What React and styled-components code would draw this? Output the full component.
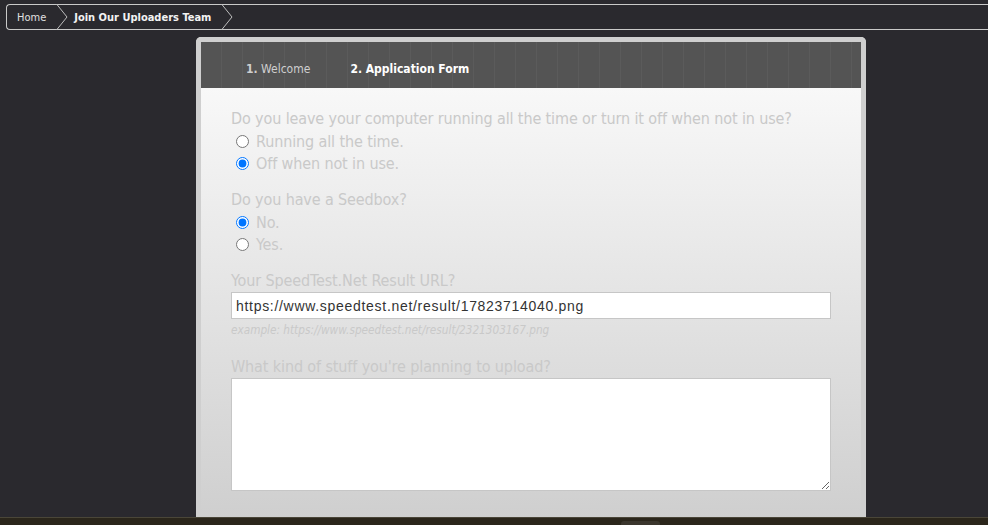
import React from "react";
import styled, { createGlobalStyle } from "styled-components";

const Global = createGlobalStyle`
  html, body {
    margin: 0;
    padding: 0;
    background: #2a292e;
    height: 100%;
    overflow: hidden;
  }
  #root {
    height: 100%;
  }
`;

const Page = styled.div`
  height: 525px;
  display: flex;
  flex-direction: column;
  font-family: "DejaVu Sans Condensed", Tahoma, sans-serif;
`;

const Crumbs = styled.nav`
  margin: 4px 0 0 6px;
  height: 26px;
  border: 1px solid #c9c9c9;
  border-right: none;
  border-radius: 4px 0 0 4px;
  display: flex;
  align-items: center;
  box-sizing: border-box;
`;

const Crumb = styled.a`
  display: flex;
  align-items: center;
  height: 100%;
  padding-left: ${(p) => (p.$first ? "10px" : "6px")};
  font-size: 11px;
  font-weight: ${(p) => (p.$strong ? "bold" : "normal")};
  color: ${(p) => (p.$strong ? "#f2f2f2" : "#e0e0e0")};
  text-decoration: none;
`;

const Chevron = styled.svg`
  margin-left: 10px;
  flex: none;
`;

const Main = styled.div`
  flex: 1;
  display: flex;
  padding-left: 196px;
  padding-top: 7px;
  min-height: 0;
`;

const Panel = styled.section`
  width: 670px;
  box-sizing: border-box;
  border: 5px solid #cfcfcf;
  border-bottom: none;
  border-radius: 5px 5px 0 0;
  display: flex;
  flex-direction: column;
  overflow: hidden;
`;

const Tabs = styled.div`
  height: 46px;
  flex: none;
  background-color: #545454;
  background-image: repeating-linear-gradient(
    to right,
    transparent 0,
    transparent 20px,
    #5b5b5b 20px,
    #5b5b5b 21px
  );
  display: flex;
  align-items: center;
  padding-left: 45px;
  gap: 40px;
`;

const Tab = styled.span`
  font-size: 12px;
  color: ${(p) => (p.$active ? "#ffffff" : "#cfcfcf")};
  font-weight: ${(p) => (p.$active ? "bold" : "normal")};
  padding-top: 7px;
  b {
    font-weight: bold;
  }
`;

const Body = styled.div`
  flex: 1;
  background: linear-gradient(to bottom, #f8f8f8 0%, #cfcfcf 100%);
  padding: 20px 30px 0 30px;
`;

const Question = styled.div`
  font-size: 16px;
  letter-spacing: -0.12px;
  color: #c9c9c9;
  line-height: 22px;
  margin-top: ${(p) => p.$gap || 0}px;
`;

const Choice = styled.label`
  display: flex;
  align-items: center;
  height: 22px;
  font-size: 16px;
  letter-spacing: -0.12px;
  color: #c9c9c9;
  input {
    margin: 0 7px 0 5px;
    width: 13px;
    height: 13px;
  }
`;

const TextInput = styled.input`
  display: block;
  width: 600px;
  height: 27px;
  box-sizing: border-box;
  border: 1px solid #c6c6c6;
  background: #fff;
  padding: 0 4px;
  font-family: "Liberation Sans", Arial, sans-serif;
  font-size: 14px;
  letter-spacing: 0.7px;
  color: #333;
  outline: none;
`;

const Hint = styled.div`
  font-size: 11.7px;
  line-height: 13px;
  font-style: italic;
  color: #c9c9c9;
  margin-top: 5px;
`;

const Area = styled.textarea`
  display: block;
  width: 600px;
  height: 113px;
  box-sizing: border-box;
  border: 1px solid #c6c6c6;
  background: #fff;
  resize: both;
  outline: none;
`;

const Footer = styled.div`
  height: 8px;
  flex: none;
  box-sizing: border-box;
  background: #2b261b;
  border-top: 1px solid #4a4638;
  display: flex;
  padding-left: 621px;
`;

const FooterTab = styled.div`
  width: 39px;
  height: 4px;
  margin-top: 3px;
  background: #3b362d;
  border-radius: 3px 3px 0 0;
`;

const chevron = (
  <Chevron width="12" height="26" viewBox="0 0 12 26">
    <polyline points="0.5,0 11,13 0.5,26" fill="none" stroke="#bdbdbd" strokeWidth="1" />
  </Chevron>
);

export default function App() {
  return (
    <Page>
      <Global />
      <Crumbs>
        <Crumb $first href="#">Home{chevron}</Crumb>
        <Crumb $strong href="#">Join Our Uploaders Team{chevron}</Crumb>
      </Crumbs>
      <Main>
        <Panel>
          <Tabs>
            <Tab><b>1.</b> Welcome</Tab>
            <Tab $active>2. Application Form</Tab>
          </Tabs>
          <Body>
            <Question>Do you leave your computer running all the time or turn it off when not in use?</Question>
            <Choice><input type="radio" name="power" />Running all the time.</Choice>
            <Choice><input type="radio" name="power" defaultChecked />Off when not in use.</Choice>

            <Question $gap={15}>Do you have a Seedbox?</Question>
            <Choice><input type="radio" name="seedbox" defaultChecked />No.</Choice>
            <Choice><input type="radio" name="seedbox" />Yes.</Choice>

            <Question $gap={15}>Your SpeedTest.Net Result URL?</Question>
            <TextInput defaultValue="https://www.speedtest.net/result/17823714040.png" />
            <Hint>example: https://www.speedtest.net/result/2321303167.png</Hint>

            <Question $gap={19}>What kind of stuff you're planning to upload?</Question>
            <Area />
          </Body>
        </Panel>
      </Main>
      <Footer>
        <FooterTab />
      </Footer>
    </Page>
  );
}
